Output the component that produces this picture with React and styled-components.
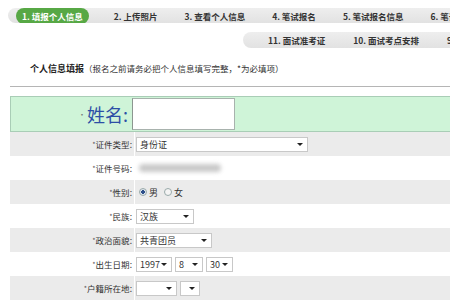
import React from "react";
import styled, { createGlobalStyle, css } from "styled-components";

const Global = createGlobalStyle`
  html, body { margin: 0; padding: 0; background: #fff; overflow: hidden; }
  body { font-family: "Noto Sans CJK SC", "Noto Sans", sans-serif; color: #333; }
`;

const Page = styled.div`
  width: 450px;
  height: 300px;
  overflow: hidden;
  display: flex;
  flex-direction: column;
`;

const StepBar = styled.div`
  display: flex;
  align-items: center;
  height: ${(p) => p.$h}px;
  margin-top: ${(p) => p.$top}px;
  margin-left: ${(p) => p.$left}px;
  padding-left: ${(p) => p.$pad}px;
  background: linear-gradient(#eeeeee, #e2e2e2);
  border-radius: ${(p) => p.$h / 2}px 0 0 ${(p) => p.$h / 2}px;
  white-space: nowrap;
  overflow: hidden;
  gap: ${(p) => p.$gap}px;
`;

const Step = styled.span`
  font-size: 8.5px;
  font-weight: 700;
  color: #333;
  line-height: 16px;
  flex: none;
  ${(p) =>
    p.$active &&
    css`
      background: #57a845;
      color: #fff;
      border-radius: 8px;
      padding: 0 6px;
      margin-right: -2px;
    `}
`;

const Heading = styled.div`
  margin: 13px 0 0 30px;
  font-size: 8.5px;
  line-height: 14px;
  color: #333;
  white-space: nowrap;
  b { font-size: 9px; font-weight: 700; color: #222; }
`;

const Rule = styled.div`
  margin: 10px 0 0 10px;
  height: 1px;
  background: #b5b5b5;
`;

const Table = styled.div`
  margin: 9px 0 0 10px;
  display: flex;
  flex-direction: column;
`;

const NameRow = styled.div`
  display: flex;
  height: 34px;
  background: #cff4d8;
  border-top: 1px solid #a9cdb6;
  border-bottom: 1px solid #a9cdb6;
  border-left: 1px solid #a9cdb6;
`;

const NameLabel = styled.div`
  width: 117px;
  display: flex;
  align-items: center;
  justify-content: flex-end;
  font-size: 18px;
  color: #2c4ea6;
  padding-right: 4px;
  span { font-size: 8px; color: #777; margin-right: 1px; }
`;

const NameInput = styled.div`
  margin: 1px 0 0 0;
  width: 101px;
  height: 30px;
  background: #fff;
  border: 1px solid #a8b2ad;
  border-left: 1px solid #8c9690;
`;

const Row = styled.div`
  display: flex;
  height: 24px;
  background: ${(p) => (p.$grey ? "#ebebeb" : "#fff")};
`;

const Label = styled.div`
  width: 122px;
  display: flex;
  align-items: center;
  justify-content: flex-end;
  font-size: 8.5px;
  color: #333;
  padding-right: 1px;
  sup { font-size: 7px; color: #555; vertical-align: 2px; }
`;

const Cell = styled.div`
  flex: 1;
  margin-left: 1px;
  border-left: 1px solid #fff;
  display: flex;
  align-items: center;
  gap: ${(p) => p.$gap ?? 3}px;
  padding-left: 1px;
  font-size: 9px;
  color: #333;
`;

const SelectBox = styled.div`
  width: ${(p) => p.$w}px;
  height: 15px;
  box-sizing: border-box;
  background: #fff;
  border: 1px solid #c8c8c8;
  display: flex;
  align-items: center;
  justify-content: space-between;
  padding: 0 4px 0 3px;
  font-size: 9px;
  color: #333;
  font-family: "Noto Sans CJK SC", "Liberation Sans", sans-serif;
`;

const Arrow = styled.span`
  width: 0;
  height: 0;
  border-left: 3px solid transparent;
  border-right: 3px solid transparent;
  border-top: 3px solid #222;
`;

const Blur = styled.div`
  margin-left: 3px;
  width: 82px;
  height: 8px;
  background: #c9c9c9;
  border-radius: 4px;
  filter: blur(2px);
`;

const Radio = styled.span`
  width: 8px;
  height: 8px;
  box-sizing: border-box;
  border-radius: 50%;
  border: 1px solid #9aa;
  background: ${(p) => (p.$on ? "radial-gradient(circle, #2d4f8a 0 1.6px, #dfe6ef 2px)" : "#f4f4f4")};
  margin-left: ${(p) => p.$ml ?? 0}px;
  margin-right: 2px;
  flex: none;
`;

const Select = ({ w, children }) => (
  <SelectBox $w={w}>
    <span>{children}</span>
    <Arrow />
  </SelectBox>
);

const Field = ({ label, grey, children, gap }) => (
  <Row $grey={grey}>
    <Label>
      <sup>*</sup>
      {label}:
    </Label>
    <Cell $gap={gap}>{children}</Cell>
  </Row>
);

export default function App() {
  return (
    <Page>
      <Global />
      <StepBar $h={20} $top={8} $left={8} $pad={8} $gap={27}>
        <Step $active>1. 填报个人信息</Step>
        <Step>2. 上传照片</Step>
        <Step>3. 查看个人信息</Step>
        <Step>4. 笔试报名</Step>
        <Step>5. 笔试报名信息</Step>
        <Step>6. 笔试准考证</Step>
      </StepBar>
      <StepBar $h={21} $top={9} $left={243} $pad={25} $gap={28}>
        <Step>11. 面试准考证</Step>
        <Step>10. 面试考点安排</Step>
        <Step>9. 面试</Step>
      </StepBar>
      <Heading>
        <b>个人信息填报</b>（报名之前请务必把个人信息填写完整，*为必填项）
      </Heading>
      <Rule />
      <Table>
        <NameRow>
          <NameLabel>
            <span>·</span>姓名:
          </NameLabel>
          <NameInput />
        </NameRow>
        <Field label="证件类型" grey>
          <Select w={172}>身份证</Select>
        </Field>
        <Field label="证件号码">
          <Blur />
        </Field>
        <Field label="性别" grey gap={0}>
          <Radio $on $ml={3} />
          <span>男</span>
          <Radio $ml={6} />
          <span>女</span>
        </Field>
        <Field label="民族">
          <Select w={58}>汉族</Select>
        </Field>
        <Field label="政治面貌" grey>
          <Select w={76}>共青团员</Select>
        </Field>
        <Field label="出生日期">
          <Select w={36}>1997</Select>
          <Select w={28}>8</Select>
          <Select w={27}>30</Select>
        </Field>
        <Field label="户籍所在地" grey>
          <Select w={41}> </Select>
          <Select w={20}> </Select>
        </Field>
      </Table>
    </Page>
  );
}
